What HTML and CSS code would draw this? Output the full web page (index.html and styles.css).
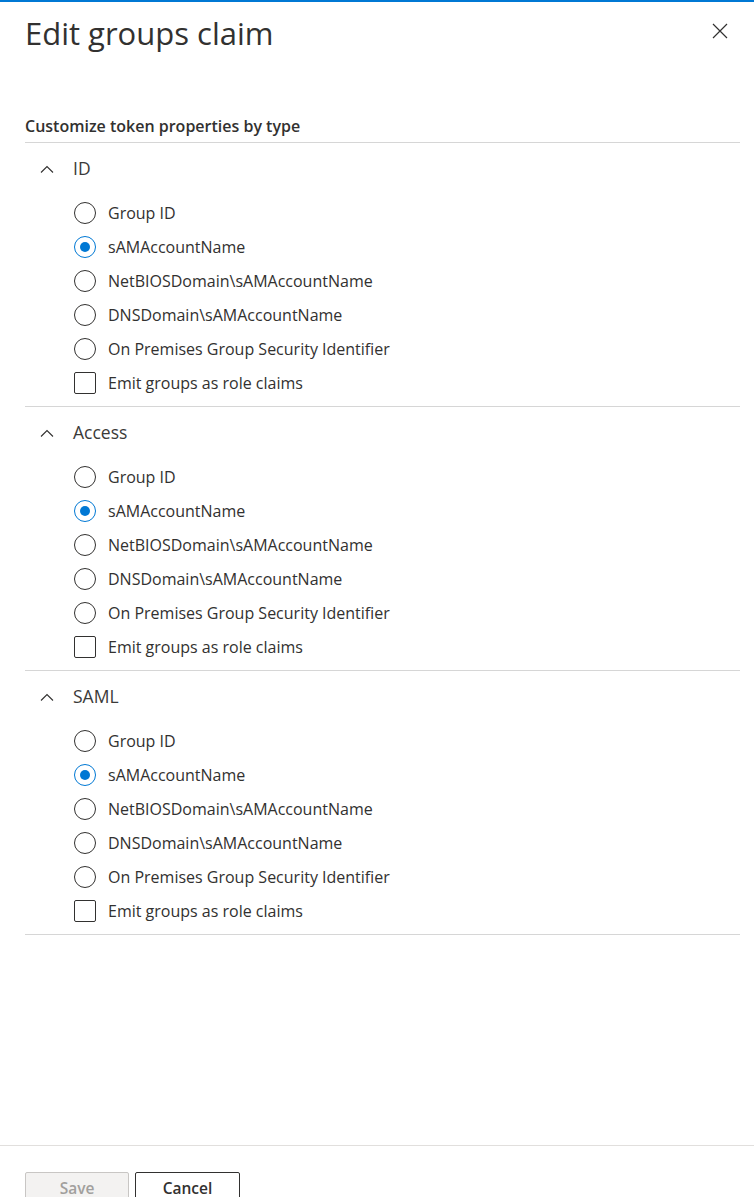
FILE: index.html
```html
<!DOCTYPE html>
<html>
<head>
<meta charset="utf-8">
<link rel="stylesheet" href="styles.css">
</head>
<body>
<div class="panel">
  <div class="topbar"></div>
  <div class="content">
    <div class="header">
      <h1 class="title">Edit groups claim</h1>
      <button class="close" aria-label="Close">
        <svg width="16" height="16" viewBox="0 0 16 16"><path d="M1 1 L15 15 M15 1 L1 15" stroke="#323130" stroke-width="1.2" fill="none"/></svg>
      </button>
    </div>
    <div class="subtitle">Customize token properties by type</div>

    <div class="section">
      <div class="sec-head">
        <svg class="chev" width="14" height="8" viewBox="0 0 14 8"><path d="M1 7.5 L7 1.5 L13 7.5" stroke="#323130" stroke-width="1.1" fill="none"/></svg>
        <span class="sec-title">ID</span>
      </div>
      <div class="options">
        <label class="opt"><span class="radio"></span><span>Group ID</span></label>
        <label class="opt"><span class="radio on"></span><span>sAMAccountName</span></label>
        <label class="opt"><span class="radio"></span><span>NetBIOSDomain\sAMAccountName</span></label>
        <label class="opt"><span class="radio"></span><span>DNSDomain\sAMAccountName</span></label>
        <label class="opt"><span class="radio"></span><span>On Premises Group Security Identifier</span></label>
        <label class="opt"><span class="check"></span><span>Emit groups as role claims</span></label>
      </div>
    </div>

    <div class="section">
      <div class="sec-head">
        <svg class="chev" width="14" height="8" viewBox="0 0 14 8"><path d="M1 7.5 L7 1.5 L13 7.5" stroke="#323130" stroke-width="1.1" fill="none"/></svg>
        <span class="sec-title">Access</span>
      </div>
      <div class="options">
        <label class="opt"><span class="radio"></span><span>Group ID</span></label>
        <label class="opt"><span class="radio on"></span><span>sAMAccountName</span></label>
        <label class="opt"><span class="radio"></span><span>NetBIOSDomain\sAMAccountName</span></label>
        <label class="opt"><span class="radio"></span><span>DNSDomain\sAMAccountName</span></label>
        <label class="opt"><span class="radio"></span><span>On Premises Group Security Identifier</span></label>
        <label class="opt"><span class="check"></span><span>Emit groups as role claims</span></label>
      </div>
    </div>

    <div class="section">
      <div class="sec-head">
        <svg class="chev" width="14" height="8" viewBox="0 0 14 8"><path d="M1 7.5 L7 1.5 L13 7.5" stroke="#323130" stroke-width="1.1" fill="none"/></svg>
        <span class="sec-title">SAML</span>
      </div>
      <div class="options">
        <label class="opt"><span class="radio"></span><span>Group ID</span></label>
        <label class="opt"><span class="radio on"></span><span>sAMAccountName</span></label>
        <label class="opt"><span class="radio"></span><span>NetBIOSDomain\sAMAccountName</span></label>
        <label class="opt"><span class="radio"></span><span>DNSDomain\sAMAccountName</span></label>
        <label class="opt"><span class="radio"></span><span>On Premises Group Security Identifier</span></label>
        <label class="opt"><span class="check"></span><span>Emit groups as role claims</span></label>
      </div>
    </div>
  </div>
  <div class="footer">
    <button class="btn btn-disabled">Save</button>
    <button class="btn btn-default">Cancel</button>
  </div>
</div>
</body>
</html>
```
FILE: styles.css
```css
html, body {
  margin: 0;
  padding: 0;
  height: 100%;
  background: #ffffff;
}
body {
  font-family: "Open Sans", "Noto Sans", sans-serif;
  color: #323130;
  overflow: hidden;
}
.panel {
  height: 100vh;
  display: flex;
  flex-direction: column;
}
.topbar {
  height: 2px;
  background: #0078d4;
  flex: none;
}
.content {
  flex: 1;
  padding: 0 14px 0 25px;
}
.header {
  display: flex;
  justify-content: space-between;
  align-items: center;
  height: 62px;
}
.title {
  margin: 0;
  font-size: 31px;
  font-weight: 400;
  letter-spacing: 0;
  line-height: 62px;
  margin-top: -1px;
}
.close {
  border: 0;
  background: none;
  padding: 0;
  width: 16px;
  height: 16px;
  margin-right: 12px;
  margin-top: -4px;
  display: flex;
}
.subtitle {
  margin-top: 52px;
  font-size: 16px;
  font-weight: 600;
  line-height: 20px;
  padding-bottom: 6px;
  border-bottom: 1px solid #d6d6d6;
}
.section {
  border-bottom: 1px solid #d6d6d6;
  padding-bottom: 6px;
}
.sec-head {
  height: 49px;
  display: flex;
  align-items: center;
}
.chev {
  margin-left: 15px;
  margin-right: 19px;
  margin-top: 2px;
}
.sec-title {
  font-size: 17.5px;
  font-weight: 400;
  color: #3b3a39;
}
.options {
  padding-top: 4px;
  padding-left: 49px;
}
.opt {
  height: 34px;
  display: flex;
  align-items: center;
  font-size: 16px;
}
.radio {
  border: 1px solid #323130;
  border-radius: 50%;
  box-sizing: border-box;
  width: 22px;
  height: 22px;
  margin-right: 12px;
  position: relative;
  flex: none;
}
.radio.on {
  border-color: #0078d4;
}
.radio.on::after {
  content: "";
  position: absolute;
  left: 5px;
  top: 5px;
  width: 10px;
  height: 10px;
  border-radius: 50%;
  background: #0078d4;
}
.check {
  width: 22px;
  height: 22px;
  box-sizing: border-box;
  border: 1px solid #323130;
  border-radius: 2px;
  margin-right: 12px;
  flex: none;
}
.footer {
  flex: none;
  box-sizing: border-box;
  height: 52px;
  border-top: 1px solid #e1dfdd;
  padding: 26px 0 0 25px;
  display: flex;
  gap: 6px;
  align-items: flex-start;
}
.btn {
  font-family: "Open Sans", "Noto Sans", sans-serif;
  font-size: 15.5px;
  font-weight: 600;
  height: 32px;
  flex: none;
  border-radius: 2px;
  padding: 0;
  box-sizing: border-box;
}
.btn-disabled {
  width: 104px;
  background: #f3f2f1;
  border: 1px solid #c8c6c4;
  color: #a19f9d;
}
.btn-default {
  width: 105px;
  background: #ffffff;
  border: 1px solid #323130;
  color: #323130;
}
```
